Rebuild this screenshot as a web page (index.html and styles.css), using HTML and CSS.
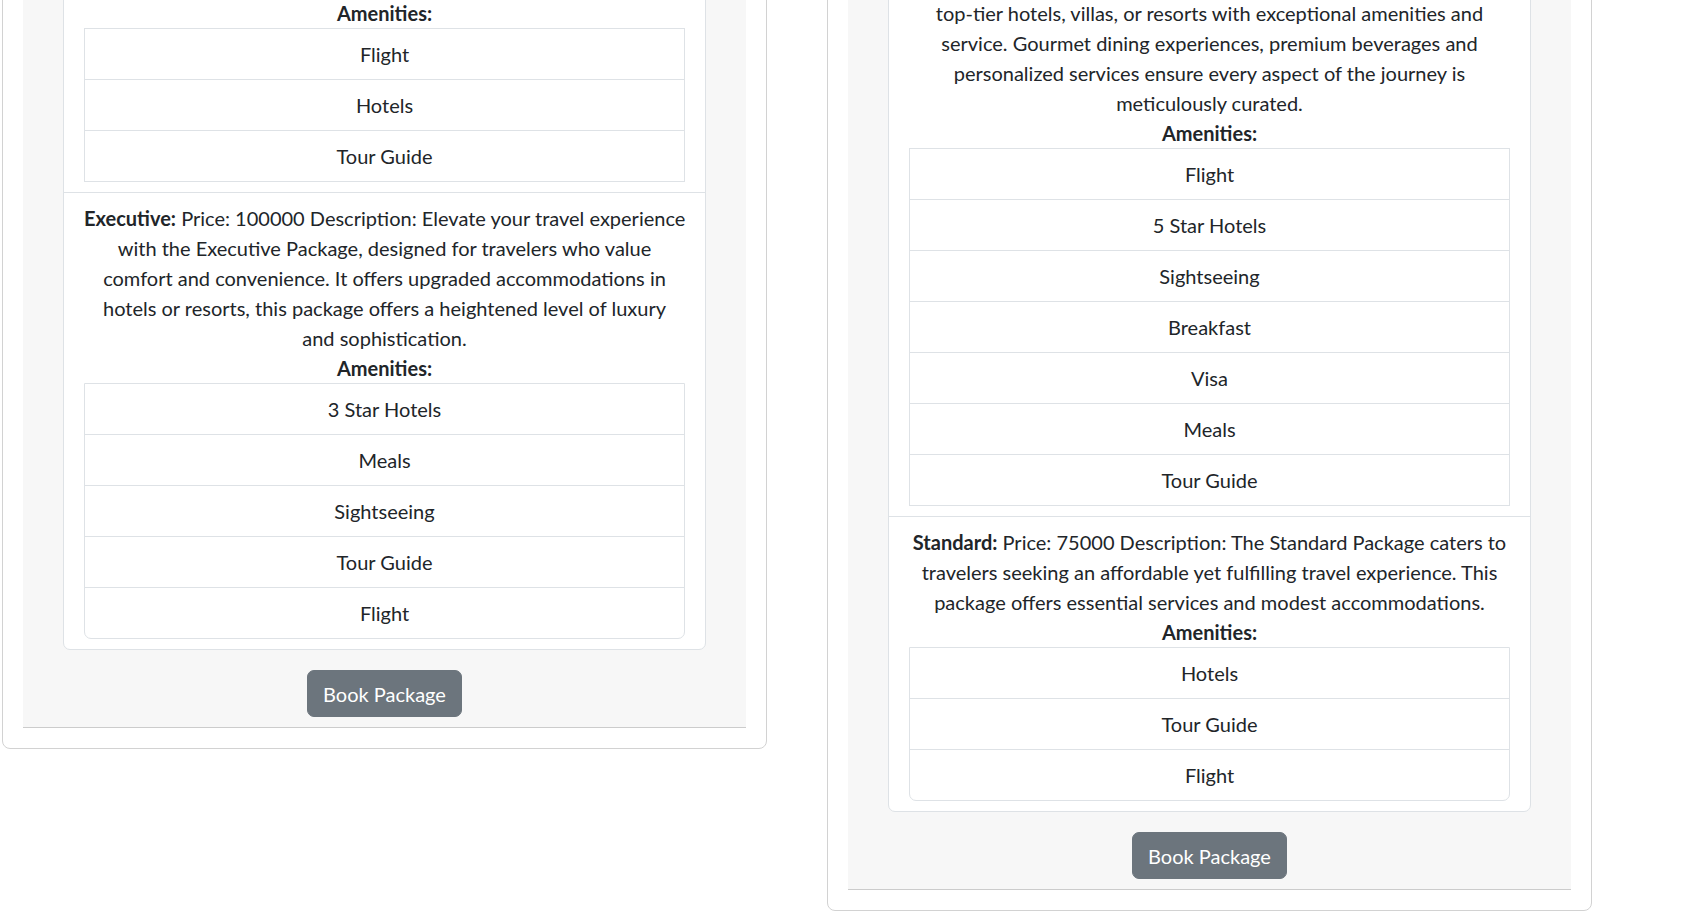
FILE: index.html
```html
<!DOCTYPE html>
<html lang="en">
<head>
<meta charset="utf-8">
<title>Packages</title>
<link rel="stylesheet" href="styles.css">
</head>
<body>
<div class="page">
  <section class="card">
    <div class="pkg-area">
      <ul class="packages">
        <li class="package">
          <strong class="label">Amenities:</strong>
          <ul class="amenities">
            <li>Flight</li>
            <li>Hotels</li>
            <li>Tour Guide</li>
          </ul>
        </li>
        <li class="package">
          <p class="desc"><strong>Executive:</strong> Price: 100000 Description: Elevate your travel experience<br>with the Executive Package, designed for travelers who value<br>comfort and convenience. It offers upgraded accommodations in<br>hotels or resorts, this package offers a heightened level of luxury<br>and sophistication.</p>
          <strong class="label">Amenities:</strong>
          <ul class="amenities">
            <li>3 Star Hotels</li>
            <li>Meals</li>
            <li>Sightseeing</li>
            <li>Tour Guide</li>
            <li>Flight</li>
          </ul>
        </li>
      </ul>
      <button class="btn" type="button">Book Package</button>
    </div>
  </section>

  <section class="card">
    <div class="pkg-area">
      <ul class="packages">
        <li class="package">
          <p class="desc">top-tier hotels, villas, or resorts with exceptional amenities and<br>service. Gourmet dining experiences, premium beverages and<br>personalized services ensure every aspect of the journey is<br>meticulously curated.</p>
          <strong class="label">Amenities:</strong>
          <ul class="amenities">
            <li>Flight</li>
            <li>5 Star Hotels</li>
            <li>Sightseeing</li>
            <li>Breakfast</li>
            <li>Visa</li>
            <li>Meals</li>
            <li>Tour Guide</li>
          </ul>
        </li>
        <li class="package">
          <p class="desc"><strong>Standard:</strong> Price: 75000 Description: The Standard Package caters to<br>travelers seeking an affordable yet fulfilling travel experience. This<br>package offers essential services and modest accommodations.</p>
          <strong class="label">Amenities:</strong>
          <ul class="amenities">
            <li>Hotels</li>
            <li>Tour Guide</li>
            <li>Flight</li>
          </ul>
        </li>
      </ul>
      <button class="btn" type="button">Book Package</button>
    </div>
  </section>
</div>
</body>
</html>
```
FILE: styles.css
```css
* { box-sizing: border-box; }

body {
  margin: 0;
  font-family: Lato, "Noto Sans", sans-serif;
  font-size: 20px;
  line-height: 30px;
  color: #212529;
  background: #ffffff;
}

.page {
  display: flex;
  align-items: flex-start;
  gap: 60px;
  padding-left: 2px;
  margin-top: -42px;
}

.card {
  width: 765px;
  border: 1px solid #d2d2d2;
  border-radius: 8px;
  padding: 20px;
  background: #ffffff;
}

.pkg-area {
  background: #f7f7f7;
  padding: 8px 40px 10px;
  border-bottom: 1px solid #cccccc;
  display: flex;
  flex-direction: column;
  align-items: center;
}

.packages {
  list-style: none;
  margin: 0;
  padding: 0;
  width: 643px;
  border: 1px solid #dee2e6;
  border-radius: 7px;
  background: #ffffff;
}

.package {
  padding: 10px 20px;
  text-align: center;
}

.package + .package {
  border-top: 1px solid #dee2e6;
}

.desc {
  margin: 0;
  white-space: nowrap;
}

.label {
  display: block;
  font-weight: 700;
}

.amenities {
  list-style: none;
  margin: 0;
  padding: 0;
  border: 1px solid #dee2e6;
}

.package:last-child .amenities {
  border-radius: 0 0 7px 7px;
}

.amenities li {
  padding: 10px 20px;
}

.amenities li + li {
  border-top: 1px solid #dee2e6;
}

.btn {
  margin-top: 20px;
  font: inherit;
  line-height: 30px;
  color: #ffffff;
  background: #6c757d;
  border: 1px solid #6c757d;
  border-radius: 7px;
  padding: 7.5px 15px;
  cursor: pointer;
}
```
